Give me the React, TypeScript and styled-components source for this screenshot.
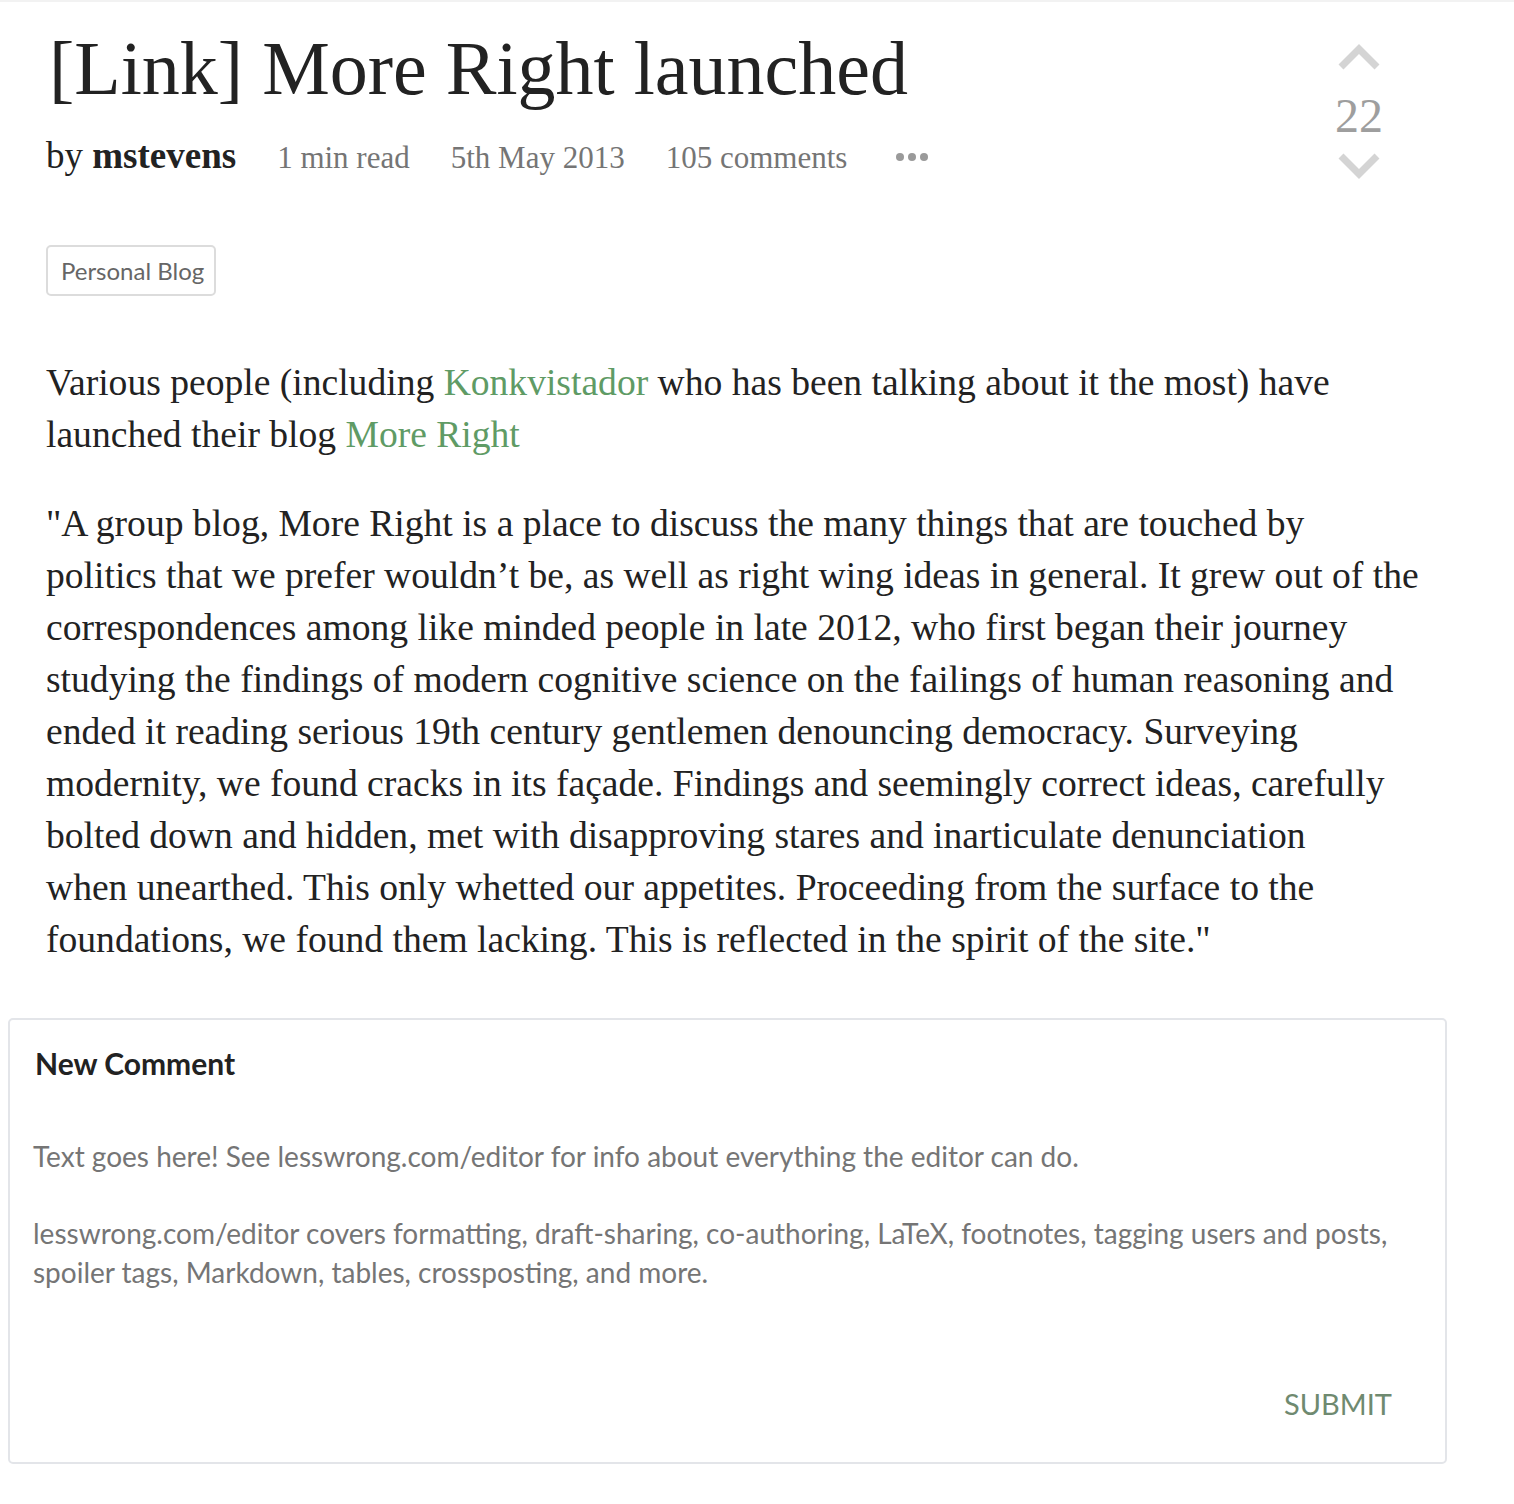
import React from "react";
import styled, { createGlobalStyle } from "styled-components";

const Global = createGlobalStyle`
  html, body { margin: 0; padding: 0; background: #fff; }
  body { font-family: "Liberation Serif", serif; color: #222; }
`;

const Page = styled.div`
  width: 1514px;
  min-height: 1504px;
  box-sizing: border-box;
  border-top: 2px solid #f2f2f2;
  padding: 0 0 40px 0;
`;

const Post = styled.article`
  padding: 0 24px 0 46px;
`;

const Header = styled.header`
  display: flex;
  justify-content: space-between;
  align-items: flex-start;
`;

const TitleBlock = styled.div`
  display: flex;
  flex-direction: column;
`;

const Title = styled.h1`
  margin: 21px 0 0 3px;
  font-family: "Liberation Serif", serif;
  font-weight: 400;
  font-size: 76px;
  line-height: 90px;
  color: #222;
`;

const Meta = styled.div`
  display: flex;
  align-items: baseline;
  gap: 41px;
  margin-top: 23px;
  height: 40px;
  line-height: 40px;
  font-size: 31px;
  color: #757575;
`;

const Author = styled.span`
  color: #222;
  font-size: 37px;
  b { font-weight: 700; }
`;

const Dots = styled.span`
  display: inline-flex;
  gap: 4px;
  align-self: center;
  margin-left: 8px;
  margin-top: 2px;
  i {
    width: 8px;
    height: 8px;
    border-radius: 50%;
    background: #9a9a9a;
    display: block;
  }
`;

const Vote = styled.div`
  display: flex;
  flex-direction: column;
  align-items: center;
  margin-top: 41px;
  margin-right: 107px;
  color: #9e9e9e;
`;

const Score = styled.div`
  font-size: 48px;
  line-height: 48px;
  margin: 19px 0 10px;
`;

const Tags = styled.div`
  margin-top: 65px;
  display: flex;
`;

const Tag = styled.span`
  border: 2px solid #dcdcdc;
  border-radius: 5px;
  padding: 10px 10px 9px 13px;
  font-family: Lato, sans-serif;
  font-size: 24px;
  line-height: 28px;
  color: #666;
`;

const Body = styled.div`
  margin-top: 61px;
  font-size: 37.6px;
  line-height: 52px;
  color: #222;
  white-space: nowrap;
  p { margin: 0 0 37px; }
  p:last-child { margin-bottom: 0; }
  a { color: #5f9b65; text-decoration: none; }
`;

const CommentBox = styled.section`
  margin: 52px 67px 0 8px;
  border: 2px solid #e3e5e9;
  border-radius: 5px;
  padding: 25px 26px 40px 23px;
  font-family: Lato, sans-serif;
`;

const CommentTitle = styled.h2`
  margin: 0 0 0 2px;
  font-size: 30px;
  line-height: 36px;
  font-weight: 700;
  color: #222;
`;

const Placeholder = styled.div`
  margin-top: 56px;
  font-size: 28px;
  line-height: 39px;
  color: #757575;
  p { margin: 0 0 38px; }
  p:last-child { margin-bottom: 0; }
`;

const Footer = styled.div`
  display: flex;
  justify-content: flex-end;
  margin-top: 94px;
  padding-right: 27px;
`;

const Submit = styled.button`
  border: none;
  background: none;
  padding: 0;
  font-family: Lato, sans-serif;
  font-size: 29px;
  line-height: 36px;
  color: #6f8a70;
  text-transform: uppercase;
`;

const Chevron = ({ down }: { down?: boolean }) => (
  <svg width="44" height="30" viewBox="0 0 44 30">
    <path
      d={down ? "M4 6 L22 24 L40 6" : "M4 24 L22 6 L40 24"}
      fill="none"
      stroke="#d4d4d4"
      strokeWidth="7"
    />
  </svg>
);

export default function App() {
  return (
    <Page>
      <Global />
      <Post>
        <Header>
          <TitleBlock>
            <Title>[Link] More Right launched</Title>
            <Meta>
              <Author>
                by <b>mstevens</b>
              </Author>
              <span>1 min read</span>
              <span>5th May 2013</span>
              <span>105 comments</span>
              <Dots>
                <i />
                <i />
                <i />
              </Dots>
            </Meta>
          </TitleBlock>
          <Vote>
            <Chevron />
            <Score>22</Score>
            <Chevron down />
          </Vote>
        </Header>
        <Tags>
          <Tag>Personal Blog</Tag>
        </Tags>
        <Body>
          <p>
            Various people (including <a href="#">Konkvistador</a> who has been talking about it the most) have
            <br />
            launched their blog <a href="#">More Right</a>
          </p>
          <p>
            "A group blog, More Right is a place to discuss the many things that are touched by
            <br />
            politics that we prefer wouldn’t be, as well as right wing ideas in general. It grew out of the
            <br />
            correspondences among like minded people in late 2012, who first began their journey
            <br />
            studying the findings of modern cognitive science on the failings of human reasoning and
            <br />
            ended it reading serious 19th century gentlemen denouncing democracy. Surveying
            <br />
            modernity, we found cracks in its façade. Findings and seemingly correct ideas, carefully
            <br />
            bolted down and hidden, met with disapproving stares and inarticulate denunciation
            <br />
            when unearthed. This only whetted our appetites. Proceeding from the surface to the
            <br />
            foundations, we found them lacking. This is reflected in the spirit of the site."
          </p>
        </Body>
      </Post>
      <CommentBox>
        <CommentTitle>New Comment</CommentTitle>
        <Placeholder>
          <p>Text goes here! See lesswrong.com/editor for info about everything the editor can do.</p>
          <p>
            lesswrong.com/editor covers formatting, draft-sharing, co-authoring, LaTeX, footnotes, tagging users
            and posts,
            <br />
            spoiler tags, Markdown, tables, crossposting, and more.
          </p>
        </Placeholder>
        <Footer>
          <Submit>Submit</Submit>
        </Footer>
      </CommentBox>
    </Page>
  );
}
